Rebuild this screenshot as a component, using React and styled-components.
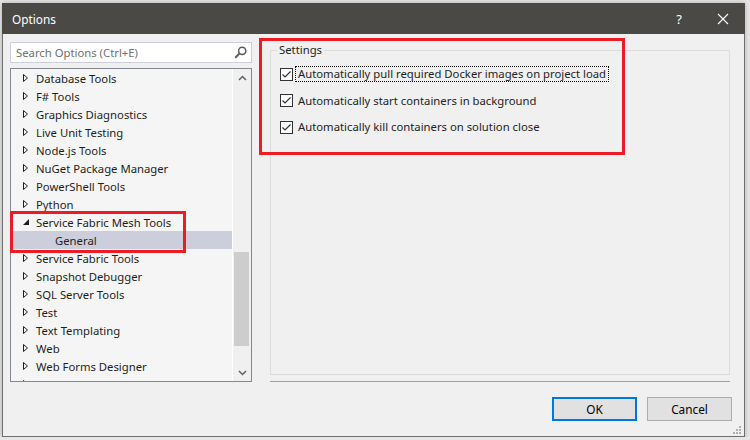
import React from 'react';
import styled, { createGlobalStyle } from 'styled-components';

const GlobalStyle = createGlobalStyle`
	html, body {
		margin: 0;
		padding: 0;
		background: #e6e6e6;
	}
	body {
		font-family: "Segoe UI", "Noto Sans", "Open Sans", sans-serif;
		font-size: 11.3px;
		color: #1e1e1e;
	}
`;

const Window = styled.div`
	position: relative;
	box-sizing: border-box;
	width: 743px;
	height: 434px;
	margin: 3px 0 0 2px;
	background: #f0f0f0;
	border: 1px solid #6e6e6e;
	border-top: none;
	box-shadow: 0 0 5px rgba(0, 0, 0, 0.25);
	display: flex;
	flex-direction: column;
`;

const TitleBar = styled.div`
	height: 31px;
	margin: 0 -1px;
	background: #4b4946;
	color: #ffffff;
	display: flex;
	align-items: center;
	padding-left: 10px;
	font-size: 11.8px;
`;

const Title = styled.div`
	flex: 1;
`;

const CaptionButton = styled.div`
	width: 44px;
	height: 31px;
	display: flex;
	align-items: center;
	justify-content: center;
	font-size: 13px;
	color: #ffffff;
`;

const Content = styled.div`
	display: flex;
	padding: 8px 0 0 7px;
`;

const LeftColumn = styled.div`
	width: 242px;
	display: flex;
	flex-direction: column;
	gap: 5px;
`;

const SearchBox = styled.div`
	box-sizing: border-box;
	height: 21px;
	background: #ffffff;
	border: 1px solid #cccedb;
	display: flex;
	align-items: center;
	padding: 0 4px 0 5px;
	color: #717171;
`;

const SearchText = styled.div`
	flex: 1;
`;

const Tree = styled.div`
	box-sizing: border-box;
	height: 314px;
	border: 1px solid #828790;
	background: #f5f5f5;
	display: flex;
	overflow: hidden;
`;

const TreeList = styled.div`
	width: 222px;
`;

const Row = styled.div`
	height: 18px;
	display: flex;
	align-items: center;
	padding-left: ${p => 11 + p.level * 33}px;
	background: ${p => (p.selected ? '#cccedb' : 'transparent')};
	white-space: nowrap;
`;

const Expander = styled.div`
	width: 14px;
	height: 18px;
	display: flex;
	align-items: center;
`;

const ScrollBar = styled.div`
	width: 18px;
	display: flex;
	flex-direction: column;
	background: #f0f0f0;
	border-left: 1px solid #ffffff;
`;

const ScrollArrow = styled.div`
	height: 17px;
	display: flex;
	align-items: center;
	justify-content: center;
`;

const ScrollTrack = styled.div`
	flex: 1;
	padding-left: 1px;
`;

const Thumb = styled.div`
	width: 15px;
	background: #cdcdcd;
`;

const RightColumn = styled.div`
	margin-left: 18px;
	width: 460px;
	display: flex;
	flex-direction: column;
`;

const GroupBox = styled.fieldset`
	box-sizing: border-box;
	height: 333px;
	margin: 0;
	padding: 0 0 0 6px;
	border: 1px solid #dcdcdc;
`;

const Legend = styled.legend`
	padding: 0 2px;
	line-height: 16px;
	color: #1e1e1e;
`;

const CheckRows = styled.div`
	padding: 3px 0 0 3px;
`;

const CheckRow = styled.div`
	height: 26.5px;
	display: flex;
	align-items: center;
	gap: 3px;
`;

const Box = styled.div`
	box-sizing: border-box;
	width: 13px;
	height: 13px;
	background: #ffffff;
	border: 1px solid #333333;
	display: flex;
	align-items: center;
	justify-content: center;
`;

const CheckLabel = styled.span`
	padding: 0 2px;
	line-height: 14px;
	outline: ${p => (p.focused ? '1px dotted #000000' : 'none')};
	white-space: nowrap;
`;

const Separator = styled.div`
	margin-top: 6px;
	height: 1px;
	background: #a0a0a0;
`;

const Footer = styled.div`
	display: flex;
	justify-content: flex-end;
	gap: 10px;
	padding: 15px 12px 0 0;
`;

const Button = styled.div`
	box-sizing: border-box;
	width: 85px;
	height: 24px;
	background: #e1e1e1;
	border: ${p => (p.primary ? '2px solid #0078d7' : '1px solid #adadad')};
	display: flex;
	align-items: center;
	justify-content: center;
	color: #000000;
	font-size: 11.8px;
`;

const Highlight = styled.div`
	position: absolute;
	box-sizing: border-box;
	border: 3px solid #ed1c24;
	pointer-events: none;
`;

const Grip = styled.svg`
	position: absolute;
	right: 3px;
	bottom: 2px;
`;

const Collapsed = () => (
	<svg width="7" height="10" viewBox="0 0 7 10">
		<path d="M1.5 1.5 L5.5 5 L1.5 8.5 Z" fill="none" stroke="#1e1e1e" strokeWidth="1" />
	</svg>
);

const Expanded = () => (
	<svg width="8" height="10" viewBox="0 0 8 10">
		<path d="M7 2 L7 8 L1 8 Z" fill="#1e1e1e" />
	</svg>
);

const CheckMark = () => (
	<svg width="11" height="11" viewBox="0 0 11 11">
		<path d="M1.5 5.5 L4 8 L9.5 2.5" fill="none" stroke="#333333" strokeWidth="1.2" />
	</svg>
);

const items = [
	{ label: 'Database Tools' },
	{ label: 'F# Tools' },
	{ label: 'Graphics Diagnostics' },
	{ label: 'Live Unit Testing' },
	{ label: 'Node.js Tools' },
	{ label: 'NuGet Package Manager' },
	{ label: 'PowerShell Tools' },
	{ label: 'Python' },
	{ label: 'Service Fabric Mesh Tools', open: true },
	{ label: 'General', level: 1, selected: true },
	{ label: 'Service Fabric Tools' },
	{ label: 'Snapshot Debugger' },
	{ label: 'SQL Server Tools' },
	{ label: 'Test' },
	{ label: 'Text Templating' },
	{ label: 'Web' },
	{ label: 'Web Forms Designer' },
	{ label: 'Web Performance Test Tools' },
];

const settings = [
	'Automatically pull required Docker images on project load',
	'Automatically start containers in background',
	'Automatically kill containers on solution close',
];

const App = () => {
	return (
		<>
			<GlobalStyle />
			<Window>
				<TitleBar>
					<Title>Options</Title>
					<CaptionButton>?</CaptionButton>
					<CaptionButton>
						<svg width="12" height="12" viewBox="0 0 12 12">
							<path d="M1 1 L11 11 M11 1 L1 11" stroke="#ffffff" strokeWidth="1.1" />
						</svg>
					</CaptionButton>
				</TitleBar>
				<Content>
					<LeftColumn>
						<SearchBox>
							<SearchText>Search Options (Ctrl+E)</SearchText>
							<svg width="13" height="13" viewBox="0 0 13 13">
								<circle cx="8.2" cy="4.8" r="3.6" fill="none" stroke="#5a5a5a" strokeWidth="1.5" />
								<path d="M5.6 7.4 L1.2 11.8" stroke="#5a5a5a" strokeWidth="2" />
							</svg>
						</SearchBox>
						<Tree>
							<TreeList>
								{items.map(item => (
									<Row key={item.label} level={item.level || 0} selected={item.selected}>
										{!item.level && <Expander>{item.open ? <Expanded /> : <Collapsed />}</Expander>}
										{item.label}
									</Row>
								))}
							</TreeList>
							<ScrollBar>
								<ScrollArrow>
									<svg width="9" height="6" viewBox="0 0 9 6">
										<path d="M1 5 L4.5 1.5 L8 5" fill="none" stroke="#606060" strokeWidth="1.5" />
									</svg>
								</ScrollArrow>
								<ScrollTrack>
									<Thumb style={{ marginTop: 166, height: 94 }} />
								</ScrollTrack>
								<ScrollArrow>
									<svg width="9" height="6" viewBox="0 0 9 6">
										<path d="M1 1 L4.5 4.5 L8 1" fill="none" stroke="#606060" strokeWidth="1.5" />
									</svg>
								</ScrollArrow>
							</ScrollBar>
						</Tree>
					</LeftColumn>
					<RightColumn>
						<GroupBox>
							<Legend>Settings</Legend>
							<CheckRows>
								{settings.map((text, i) => (
									<CheckRow key={text}>
										<Box><CheckMark /></Box>
										<CheckLabel focused={i === 0}>{text}</CheckLabel>
									</CheckRow>
								))}
							</CheckRows>
						</GroupBox>
						<Separator />
					</RightColumn>
				</Content>
				<Footer>
					<Button primary>OK</Button>
					<Button>Cancel</Button>
				</Footer>
				<Highlight style={{ left: 7, top: 208, width: 176, height: 42 }} />
				<Highlight style={{ left: 256, top: 35, width: 366, height: 117 }} />
				<Grip width="10" height="10" viewBox="0 0 10 10">
					<rect x="8" y="2" width="2" height="2" fill="#b0b0b0" />
					<rect x="5" y="5" width="2" height="2" fill="#b0b0b0" />
					<rect x="8" y="5" width="2" height="2" fill="#b0b0b0" />
					<rect x="2" y="8" width="2" height="2" fill="#b0b0b0" />
					<rect x="5" y="8" width="2" height="2" fill="#b0b0b0" />
					<rect x="8" y="8" width="2" height="2" fill="#b0b0b0" />
				</Grip>
			</Window>
		</>
	);
};

export default App;
